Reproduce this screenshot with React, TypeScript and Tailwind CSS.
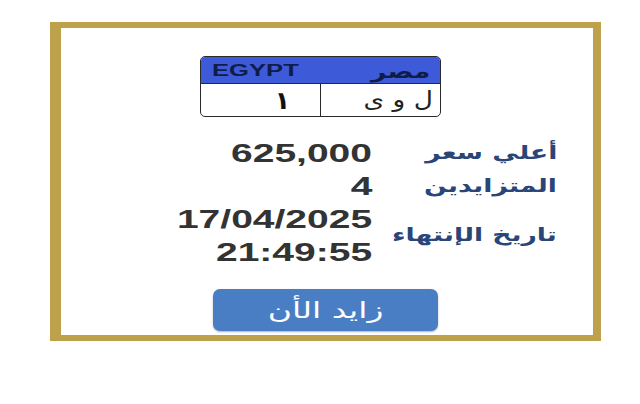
import React from "react";

const rows = [
  { label: "أعلي سعر", values: ["625,000"] },
  { label: "المتزايدين", values: ["4"] },
  { label: "تاريخ الإنتهاء", values: ["17/04/2025", "21:49:55"] },
];

// لوحة الأرقام المصرية
const Plate = () => (
  <div className="ml-[139px] mt-[28px] flex h-[61px] w-[241px] flex-col overflow-hidden rounded-[5px] border-[1.5px] border-[#2a2a2a]">
    <div className="flex h-[27px] items-center justify-between border-b-[1.5px] border-[#2a2a2a] bg-[#3d5ad8] pl-[11px] pr-[10px] pt-[2px]">
      <span className="inline-block origin-left scale-x-[1.6] font-['Liberation_Sans',sans-serif] text-[16px] font-bold leading-none text-[#101c4a]">
        EGYPT
      </span>
      <span
        className="inline-block origin-right scale-x-[1.4] font-['DejaVu_Sans',sans-serif] text-[19px] font-bold leading-none text-[#101c4a]"
        dir="rtl"
      >
        مصر
      </span>
    </div>
    <div className="flex flex-1">
      <div className="flex w-[120px] items-center justify-end border-r-[1.5px] border-[#2a2a2a] pr-[30px]">
        <span className="font-['DejaVu_Sans',sans-serif] text-[25px] font-bold leading-none text-[#111]">١</span>
      </div>
      <div className="flex flex-1 items-center justify-end pr-[7px]">
        <span
          className="inline-block origin-right scale-x-[1.2] font-['DejaVu_Sans',sans-serif] text-[22px] leading-none tracking-[3px] text-[#222]"
          dir="rtl"
        >
          ل و ى
        </span>
      </div>
    </div>
  </div>
);

export default function App() {
  return (
    <div className="h-[404px] w-[640px] bg-white pl-[50px] pt-[22px]">
      <div className="flex h-[319px] w-[551px] flex-col border-y-[6px] border-l-[11px] border-r-[8px] border-[#bda24b] bg-white">
        <Plate />

        <div className="mt-[20px] flex flex-col">
          {rows.map((row) => (
            <div key={row.label} className="flex items-center">
              <div className="flex w-[311px] flex-col items-end">
                {row.values.map((v) => (
                  <span
                    key={v}
                    className="inline-block origin-right scale-x-[1.5] font-['Liberation_Sans',sans-serif] text-[26px] font-bold leading-[33px] text-[#333]"
                  >
                    {v}
                  </span>
                ))}
              </div>
              <div className="ml-[25px] flex w-[160px] justify-end pb-[3px]">
                <span
                  className="inline-block origin-right scale-x-[1.4] font-['DejaVu_Sans',sans-serif] text-[19px] font-bold tracking-[0.5px] text-[#2a4577]"
                  dir="rtl"
                >
                  {row.label}
                </span>
              </div>
            </div>
          ))}
        </div>

        <button className="ml-[152px] mt-[20px] flex h-[42px] w-[225px] items-center justify-center rounded-[7px] bg-[#4a7ec4] shadow-[0_1px_2px_rgba(0,0,0,0.3)]">
          <span
            className="inline-block scale-x-[1.5] font-['DejaVu_Sans',sans-serif] text-[22px] tracking-[2px] text-white"
            dir="rtl"
          >
            زايد الأن
          </span>
        </button>
      </div>
    </div>
  );
}
